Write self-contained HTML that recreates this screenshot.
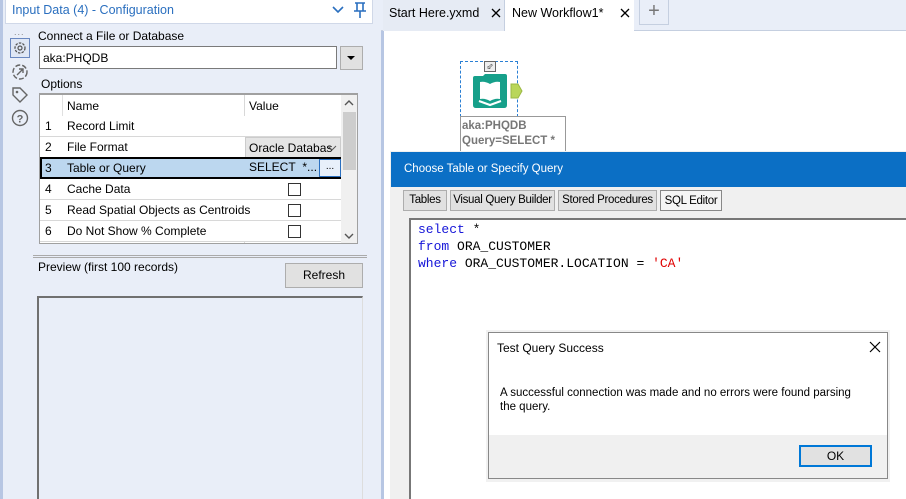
<!DOCTYPE html>
<html><head><meta charset="utf-8"><style>
*{box-sizing:border-box;margin:0;padding:0}
html,body{width:906px;height:499px;overflow:hidden}
body{position:relative;background:#fff;font-family:"Liberation Sans",sans-serif;font-size:12px;color:#000}
.a{position:absolute;white-space:nowrap}
.row{position:absolute;left:40px;width:301px;height:21px;border-bottom:1px solid #d8d8d8;background:#fff}
.row span{position:absolute;top:3px}
.cb{position:absolute;left:248px;top:4px;width:13px;height:13px;border:1px solid #333;background:#fff}
.mono{font-family:"Liberation Mono",monospace;font-size:13px}
.tb{background:#e1e1e1;border:1px solid #adadad;text-align:center;line-height:19px;font-size:11.5px;letter-spacing:-0.3px}
</style></head><body>
<div class="a" style="left:0;top:0;width:381px;height:499px;background:#e9eef8;border-left:3px solid #b7c6e3"></div>
<div class="a" style="left:5px;top:0;width:368px;height:24px;background:#fff;border:1px solid #d0d8e8;border-top:none"></div>
<div class="a" style="left:12px;top:3px;color:#2a6fbf;font-size:12.5px">Input Data (4) - Configuration</div>
<svg class="a" style="left:331px;top:5px" width="14" height="10"><path d="M2 2 L7 7 L12 2" stroke="#2a6fbf" stroke-width="1.6" fill="none"/></svg>
<svg class="a" style="left:352px;top:1px" width="16" height="18"><path d="M3 2 H13 M5 2 V10 M11 2 V10 M2 10 H14 M8 10 V17" stroke="#2a6fbf" stroke-width="1.6" fill="none"/></svg>
<div class="a" style="left:14px;top:27px;color:#888;font-size:9px;letter-spacing:1px">...</div>
<div class="a" style="left:10px;top:38px;width:20px;height:20px;border:1px solid #6a88c0;background:#dfe7f5"></div>
<svg class="a" style="left:12px;top:40px" width="16" height="16"><circle cx="8" cy="8" r="5" stroke="#555" stroke-width="1.3" fill="none" stroke-dasharray="2.5 1.2"/><circle cx="8" cy="8" r="2" stroke="#555" stroke-width="1.2" fill="none"/></svg>
<svg class="a" style="left:11px;top:63px" width="18" height="18"><circle cx="9" cy="9" r="7" stroke="#666" stroke-width="1.4" fill="none" stroke-dasharray="5 2"/><path d="M6 12 L12 6 M8 6 H12 V10" stroke="#666" stroke-width="1.4" fill="none"/></svg>
<svg class="a" style="left:11px;top:86px" width="18" height="18"><path d="M2 2 H9 L16 9 L9 16 L2 9 Z" stroke="#666" stroke-width="1.4" fill="none"/><circle cx="6" cy="6" r="1.3" fill="#666"/></svg>
<svg class="a" style="left:11px;top:109px" width="18" height="18"><circle cx="9" cy="9" r="7.5" stroke="#666" stroke-width="1.4" fill="none"/><text x="9" y="13.5" font-size="11" font-weight="bold" text-anchor="middle" fill="#666" font-family="Liberation Sans">?</text></svg>
<div class="a" style="left:38px;top:29px">Connect a File or Database</div>
<div class="a" style="left:39px;top:46px;width:298px;height:23px;background:#fff;border:1px solid #7a7a7a;padding:4px 3px">aka:PHQDB</div>
<div class="a" style="left:340px;top:46px;width:23px;height:24px;background:#e1e1e1;border:1px solid #adadad"></div>
<div class="a" style="left:347px;top:56px;border-left:4px solid transparent;border-right:4px solid transparent;border-top:4px solid #000"></div>
<div class="a" style="left:41px;top:77px">Options</div>
<div class="a" style="left:39px;top:93px;width:319px;height:151px;background:#fff;border:1px solid #a0a0a0;border-top:2px solid #a0a0a0"></div>
<div class="a" style="left:62px;top:95px;width:279px;height:21px;border-left:1px solid #e0e0e0"></div>
<div class="a" style="left:67px;top:99px">Name</div>
<div class="a" style="left:244px;top:95px;width:1px;height:148px;background:#d8d8d8"></div>
<div class="a" style="left:249px;top:99px">Value</div>
<div class="row" style="top:116px"><span style="left:5px">1</span><span style="left:27px">Record Limit</span></div>
<div class="row" style="top:137px"><span style="left:5px">2</span><span style="left:27px">File Format</span><div class="a" style="left:205px;top:0;width:96px;height:21px;background:#e5e5e5;border:1px solid #ccc;padding:3px 3px;overflow:hidden">Oracle Databas</div><svg class="a" style="left:287px;top:8px" width="10" height="6"><path d="M1 1 L5 5 L9 1" stroke="#555" fill="none"/></svg></div>
<div class="row" style="top:157px;left:40px;height:22px;background:#bcd7ef;border:2px solid #000"><span style="left:3px;top:2px">3</span><span style="left:25px;top:2px">Table or Query</span><span style="left:207px;top:1px">SELECT&nbsp; *...</span><div class="a" style="left:277px;top:0;width:22px;height:18px;background:#e8f0fa;border:1px solid #2a6fbf;font-size:10px;text-align:center;line-height:14px">...</div></div>
<div class="row" style="top:179px"><span style="left:5px">4</span><span style="left:27px">Cache Data</span><div class="cb"></div></div>
<div class="row" style="top:200px"><span style="left:5px">5</span><span style="left:27px">Read Spatial Objects as Centroids</span><div class="cb"></div></div>
<div class="row" style="top:221px"><span style="left:5px">6</span><span style="left:27px">Do Not Show % Complete</span><div class="cb"></div></div>
<div class="a" style="left:341px;top:95px;width:16px;height:148px;background:#f0f0f0"></div>
<div class="a" style="left:343px;top:112px;width:13px;height:58px;background:#cdcdcd"></div>
<svg class="a" style="left:344px;top:100px" width="10" height="6"><path d="M1 5 L5 1 L9 5" stroke="#555" stroke-width="1.4" fill="none"/></svg>
<svg class="a" style="left:344px;top:233px" width="10" height="6"><path d="M1 1 L5 5 L9 1" stroke="#555" stroke-width="1.4" fill="none"/></svg>
<div class="a" style="left:33px;top:255px;width:334px;height:3px;border-top:1px solid #aaa;border-bottom:1px solid #aaa"></div>
<div class="a" style="left:38px;top:260px">Preview (first 100 records)</div>
<div class="a" style="left:285px;top:263px;width:78px;height:25px;background:#e1e1e1;border:1px solid #adadad;text-align:center;line-height:23px">Refresh</div>
<div class="a" style="left:37px;top:296px;width:326px;height:203px;background:#e9eef8;border-top:2px solid #707070;border-left:2px solid #707070;border-right:1px solid #ddd"></div>
<div class="a" style="left:381px;top:0;width:525px;height:31px;background:#e9eef8;border-bottom:1px solid #c5cfe0"></div>
<div class="a" style="left:383px;top:0;width:122px;height:31px;background:#e6ebf4;border-right:1px solid #c5cfe0"></div>
<div class="a" style="left:389px;top:6px;font-size:12.5px">Start Here.yxmd</div>
<svg class="a" style="left:491px;top:8px" width="10" height="10"><path d="M1 1 L9 9 M9 1 L1 9" stroke="#000" stroke-width="1.3"/></svg>
<div class="a" style="left:505px;top:0;width:129px;height:32px;background:#fff"></div>
<div class="a" style="left:512px;top:6px;font-size:12.5px">New Workflow1*</div>
<svg class="a" style="left:620px;top:8px" width="10" height="10"><path d="M1 1 L9 9 M9 1 L1 9" stroke="#000" stroke-width="1.3"/></svg>
<div class="a" style="left:639px;top:0;width:30px;height:25px;border:1px solid #c5cfe0;border-top:none;text-align:center;font-size:20px;color:#777;line-height:22px">+</div>
<div class="a" style="left:381px;top:31px;width:3px;height:468px;background:#b7c6e3"></div>
<div class="a" style="left:460px;top:61px;width:58px;height:56px;border:1px dashed #2a7fd4"></div>
<div class="a" style="left:484px;top:61px;width:12px;height:11px;border:1px solid #666;background:#eee;font-size:8px;text-align:center;line-height:9px">&#11011;</div>
<svg class="a" style="left:471px;top:72px" width="38" height="38"><path d="M4 4 H12 L14 2 H34 Q36 2 36 4 V33 Q36 36 33 36 H5 Q2 36 2 33 V6 Q2 4 4 4Z" fill="#16a08a"/><path d="M9 10 Q14 9 19 12 V29 Q14 26 9 27Z M29 10 Q24 9 19 12 V29 Q24 26 29 27Z" fill="#fff"/><path d="M8 29 L19 33 L30 29" stroke="#fff" stroke-width="2" fill="none"/></svg>
<svg class="a" style="left:510px;top:83px" width="14" height="16"><path d="M1 1 H8 L12 8 L8 15 H1Z" fill="#b9d65a" stroke="#9bb845"/></svg>
<div class="a" style="left:460px;top:116px;width:106px;height:40px;border:1px solid #999;background:#fff;color:#777;font-size:11.5px;font-weight:bold;padding:2px 1px;line-height:15px">aka:PHQDB<br>Query=SELECT *</div>
<div class="a" style="left:390px;top:151px;width:516px;height:348px;background:#f0f0f0"></div>
<div class="a" style="left:391px;top:152px;width:515px;height:35px;background:#0b6fc5"></div>
<div class="a" style="left:404px;top:163px;color:#fff;font-size:11.5px">Choose Table or Specify Query</div>
<div class="a tb" style="left:403px;top:190px;width:44px;height:21px">Tables</div>
<div class="a tb" style="left:450px;top:190px;width:105px;height:21px">Visual Query Builder</div>
<div class="a tb" style="left:558px;top:190px;width:99px;height:21px">Stored Procedures</div>
<div class="a tb" style="left:660px;top:190px;width:62px;height:21px;background:#f5f5f5;border-color:#888;line-height:21px">SQL Editor</div>
<div class="a" style="left:409px;top:218px;width:497px;height:281px;background:#fff;border-left:2px solid #777;border-top:2px solid #777"></div>
<div class="a mono" style="left:418px;top:221px;line-height:17px;white-space:pre"><span style="color:#1515d8">select</span> *
<span style="color:#1515d8">from</span> ORA_CUSTOMER
<span style="color:#1515d8">where</span> ORA_CUSTOMER.LOCATION = <span style="color:#e00000">'CA'</span></div>
<div class="a" style="left:486px;top:330px;width:404px;height:152px;background:#e8e8e8;opacity:.6"></div>
<div class="a" style="left:488px;top:332px;width:400px;height:147px;background:#fff;border:1px solid #888"></div>
<div class="a" style="left:489px;top:435px;width:398px;height:43px;background:#f0f0f0"></div>
<div class="a" style="left:497px;top:341px;font-size:12px">Test Query Success</div>
<svg class="a" style="left:869px;top:341px" width="12" height="12"><path d="M1 1 L11 11 M11 1 L1 11" stroke="#000" stroke-width="1.2"/></svg>
<div class="a" style="left:500px;top:386px;font-size:11.5px;line-height:14px">A successful connection was made and no errors were found parsing<br>the query.</div>
<div class="a" style="left:799px;top:445px;width:73px;height:22px;background:#e1e1e1;border:2px solid #0078d7;text-align:center;line-height:18px">OK</div>
</body></html>
